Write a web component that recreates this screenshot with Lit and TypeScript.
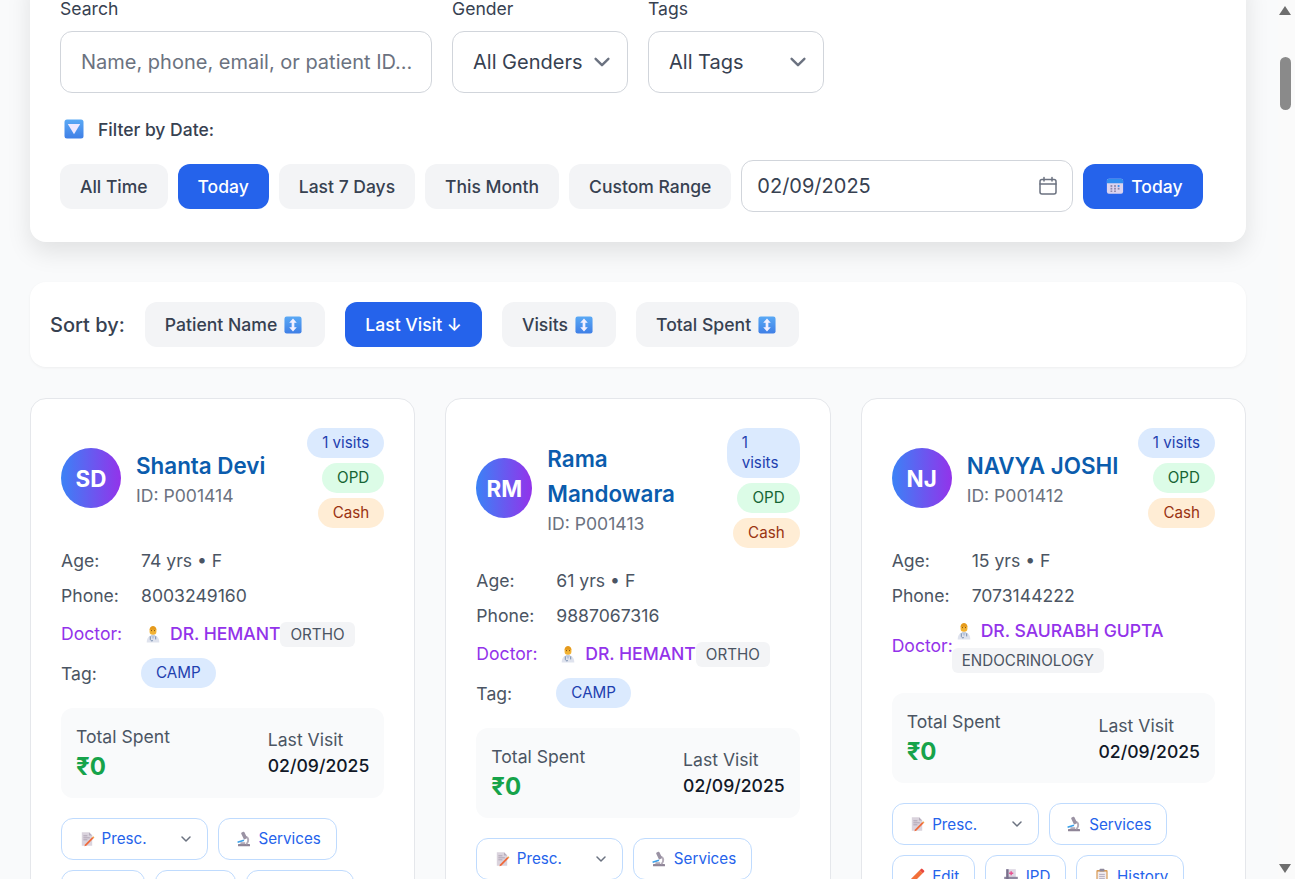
import { LitElement, html, css, svg } from "lit";
import { customElement } from "lit/decorators.js";

const chevron = html`<svg class="chev" viewBox="0 0 20 20" fill="none" stroke="currentColor" stroke-width="1.5" stroke-linecap="round" stroke-linejoin="round"><path d="M6 8l4 4 4-4"/></svg>`;

const ico = (content: unknown, cls = "") => html`<svg class="ico ${cls}" viewBox="0 0 20 20">${content}</svg>`;

const defsGrad = svg`<linearGradient id="blueSq" x1="0" y1="0" x2="0" y2="1"><stop offset="0" stop-color="#5aa9f5"/><stop offset="1" stop-color="#3f7fe6"/></linearGradient>`;
const downBox = ico(svg`${defsGrad}<rect x="0.5" y="0.5" width="19" height="19" rx="2.5" fill="url(#blueSq)"/><path d="M3.8 5h12.4L10 15.2z" fill="#efe8ff"/>`);
const updown = ico(svg`${defsGrad}<rect x="0.5" y="0.5" width="19" height="19" rx="2.5" fill="url(#blueSq)"/><path d="M10 2.8L14.2 7.6H11.5v4.8h2.7L10 17.2 5.8 12.4h2.7V7.6H5.8z" fill="#f3efff"/>`);
const calendar = ico(svg`<rect x="1" y="2" width="18" height="16.5" rx="2.2" fill="#dcd3ee"/><path d="M1 7V4.2C1 3 2 2 3.2 2h13.6C18 2 19 3 19 4.2V7z" fill="#2f8df0"/><g fill="#8d86a8"><rect x="5" y="9" width="2" height="2"/><rect x="9" y="9" width="2" height="2"/><rect x="5" y="12" width="2" height="2"/><rect x="9" y="12" width="2" height="2"/><rect x="13" y="12" width="2" height="2"/><rect x="5" y="15" width="2" height="1.6"/><rect x="9" y="15" width="2" height="1.6"/></g><rect x="13" y="9" width="2" height="2" fill="#2f8df0"/>`, "cal");
const doctor = ico(svg`<path d="M3 19.5c0-5 2.5-8 7-8s7 3 7 8z" fill="#dfe3ee"/><path d="M7.5 11.5L10 16l2.5-4.5z" fill="#b9c6dc"/><path d="M7 12.5v3.5M13 12.5v3.5M7 16c1 2 2 2 3 1" stroke="#5f7ba0" stroke-width="0.9" fill="none"/><rect x="6.2" y="2.2" width="7.6" height="8.6" rx="3.4" fill="#f2b233"/><path d="M6.2 5.2C6.4 2.5 8 1 10 1s3.6 1.5 3.8 4.2z" fill="#e59a1c"/><rect x="7.8" y="5.6" width="1" height="1.2" fill="#7a4a12"/><rect x="11.2" y="5.6" width="1" height="1.2" fill="#7a4a12"/>`);
const memo = ico(svg`<path d="M3.5 1.5h9l4 4v13h-13z" fill="#dad3dd"/><path d="M12.5 1.5l4 4h-4z" fill="#b6aebc"/><path d="M5.5 6h5M5.5 8.5h8M5.5 11h5" stroke="#a49bab" stroke-width="1"/><path d="M7.5 16.8l-.8 2.4 2.4-.8 9.2-9.2-1.6-1.6z" fill="#f0693a"/><path d="M16.7 7.6l1.6 1.6 1-1-1.6-1.6z" fill="#e9a03c"/>`);
const microscope = ico(svg`<rect x="2.5" y="16.3" width="15" height="2.8" rx="0.7" fill="#8f8597"/><path d="M11.5 6.8c3 .9 4.2 3.6 3.5 6.2-.3 1.3-1.1 2.5-2.2 3.3" stroke="#b3abb8" stroke-width="2.4" fill="none"/><rect x="8" y="1" width="4.4" height="9.4" rx="1.2" transform="rotate(-25 10 6)" fill="#9a92a3"/><path d="M2 14.2l8-2.6" stroke="#3aa0ea" stroke-width="2"/><rect x="5.5" y="14" width="6" height="2.4" fill="#b3abb8"/>`);
const pencil = ico(svg`<path d="M1.5 18.5l1.2-5 10.6-10.6 3.8 3.8L6.5 17.3z" fill="#f2703a"/><path d="M13.3 2.9l1.7-1.7a1.3 1.3 0 0 1 1.8 0l2 2a1.3 1.3 0 0 1 0 1.8l-1.7 1.7z" fill="#e8453c"/><path d="M2.7 13.5l3.8 3.8-5 1.2z" fill="#f6cfa3"/>`);
const hospital = ico(svg`<rect x="4" y="1.5" width="12" height="11" fill="#ddd6e3"/><rect x="1.5" y="11" width="17" height="8" fill="#8f88a0"/><rect x="4" y="1.5" width="3" height="17" fill="#786f8c"/><path d="M9.3 4h1.8v1.7h1.7v1.8h-1.7v1.7H9.3V7.5H7.6V5.7h1.7z" fill="#e8528f"/>`);
const clipboard = ico(svg`<rect x="3" y="2.5" width="14" height="17" rx="1.3" fill="#d99a52"/><rect x="4.5" y="4.5" width="11" height="13.5" fill="#f1ecf0"/><rect x="7" y="1" width="6" height="3.5" rx="0.8" fill="#8f8a9c"/><path d="M6.5 8h7M6.5 10.5h7M6.5 13h7M6.5 15.5h4" stroke="#a39bb0" stroke-width="1"/>`);

interface Patient {
  initials: string; name: string; id: string; age: string; phone: string;
  doctor: string; spec: string; tag?: string;
}
const patients: Patient[] = [
  { initials: "SD", name: "Shanta Devi", id: "P001414", age: "74 yrs • F", phone: "8003249160", doctor: "DR. HEMANT", spec: "ORTHO", tag: "CAMP" },
  { initials: "RM", name: "Rama Mandowara", id: "P001413", age: "61 yrs • F", phone: "9887067316", doctor: "DR. HEMANT", spec: "ORTHO", tag: "CAMP" },
  { initials: "NJ", name: "NAVYA JOSHI", id: "P001412", age: "15 yrs • F", phone: "7073144222", doctor: "DR. SAURABH GUPTA", spec: "ENDOCRINOLOGY" },
];

@customElement("app-root")
export class AppRoot extends LitElement {
  static styles = css`
    :host { display: flex; height: 879px; overflow: hidden; background: #fafafa; font-family: Inter, "Noto Sans", sans-serif; color: #374151; }
    * { box-sizing: border-box; }
    .page { width: 1278px; flex: none; background: #f9fafb; padding: 0 32px 0 30px; overflow: hidden; }
    .scrollbar { width: 17px; flex: none; background: #fafafa; position: relative; }
    .thumb { position: absolute; left: 2px; top: 57px; width: 11px; height: 53px; border-radius: 6px; background: #8a8a8a; }
    .arrow { position: absolute; left: 1px; width: 0; height: 0; border-left: 6.5px solid transparent; border-right: 6.5px solid transparent; }
    .arrow.up { top: 6px; border-bottom: 9px solid #6e6e6e; }
    .arrow.down { bottom: 6px; border-top: 9px solid #6e6e6e; }

    .ico { width: 18px; height: 18px; flex: none; display: block; }

    .filters { margin-top: -30px; background: #fff; border-radius: 16px; padding: 26px 30px 33px; box-shadow: 0 10px 25px rgba(0,0,0,.1); height: 272px; }
    .fields { display: flex; gap: 20px; }
    .field { display: flex; flex-direction: column; gap: 10px; }
    .field label { font-size: 17.6px; line-height: 25px; font-weight: 400; color: #374151; height: 25px; }
    .control { height: 62px; border: 1px solid #d1d5db; border-radius: 12px; background: #fff; font-size: 20px; display: flex; align-items: center; padding: 0 20px; color: #374151; white-space: nowrap; }
    .search { width: 372px; color: #6b7280; }
    .sel { width: 176px; justify-content: space-between; padding-right: 9px; }
    .chev { width: 20px; height: 20px; color: #6b7280; flex: none; }
    .sel .chev { width: 32px; height: 32px; }
    .date-label { display: flex; align-items: center; gap: 14px; margin: 24px 0 0 4px; height: 24px; font-size: 17.5px; font-weight: 500; }
    .date-label .ico { width: 20px; height: 20px; }
    .date-row { display: flex; align-items: center; gap: 10px; margin-top: 19px; }
    .btn { height: 45px; padding: 0 20px; border-radius: 12px; background: #f3f4f6; color: #374151; font-size: 17.5px; font-weight: 500; display: flex; align-items: center; gap: 6px; white-space: nowrap; }
    .btn.on { background: #2563eb; color: #fff; }
    .btn .ico { margin: 0 3px 0 1px; }
    .btn .ico.cal { margin: 0 1px 0 3px; }
    .date-input { width: 332px; height: 52px; padding: 0 14px 0 15px; border: 1px solid #d1d5db; border-radius: 12px; display: flex; align-items: center; justify-content: space-between; font-size: 20px; color: #374151; }
    .date-input svg { width: 20px; height: 20px; color: #6b7280; }

    .sort { margin-top: 40px; height: 85px; background: #fff; border-radius: 16px; box-shadow: 0 1px 3px rgba(0,0,0,.05); padding: 0 20px; display: flex; align-items: center; gap: 20px; }
    .sort-label { font-size: 20px; font-weight: 500; }
    .sort .btn { font-size: 17.6px; }

    .grid { display: grid; grid-template-columns: repeat(3, 1fr); gap: 30px; margin-top: 31px; }
    .card { height: 620px; background: #fff; border: 1px solid #e5e7eb; border-radius: 16px; padding: 29px 30px 30px; font-size: 17.6px; color: #4b5563; }
    .head { display: flex; align-items: center; justify-content: space-between; gap: 15px; margin-bottom: 15px; }
    .who { display: flex; align-items: center; gap: 15px; min-width: 0; }
    .avatar { width: 60px; height: 60px; flex: none; border-radius: 50%; background: linear-gradient(90deg, #3b82f6, #9333ea); color: #fff; display: flex; align-items: center; justify-content: center; font-size: 22.4px; font-weight: 700; }
    .avatar.squeezed { width: 56px; }
    .name { font-size: 22.4px; line-height: 35px; font-weight: 600; color: #0b5cad; }
    .pid { font-size: 17.6px; line-height: 25px; color: #6b7280; }
    .badges { display: flex; flex-direction: column; align-items: flex-end; gap: 5px; flex: none; }
    .badges.squeezed { width: 73px; }
    .badge { padding: 5px 15px; border-radius: 20px; font-size: 15.2px; line-height: 20px; font-weight: 400; }
    .b-visits { background: #dbeafe; color: #1e40af; }
    .b-opd { background: #dcfce7; color: #166534; }
    .b-cash { background: #ffedd5; color: #9a3412; }
    .row { display: flex; align-items: center; min-height: 35px; }
    .row .k { width: 80px; flex: none; }
    .row.tagrow { min-height: 38.5px; }
    .row.doc { color: #9333ea; min-height: 41px; }
    .row.doc.wrap { min-height: 65px; padding-bottom: 5px; }
    .row.doc.wrap .k { width: 60px; margin-top: 5px; }
    .doc-v { display: flex; align-items: center; flex-wrap: wrap; font-weight: 500; }
    .doc-name { display: flex; align-items: center; gap: 8px; padding-left: 3px; letter-spacing: -0.05px; }
    .wrap .doc-name { line-height: 34px; }
    .doc-name .ico { width: 18px; height: 18px; margin-left: 0; }
    .spec { background: #f3f4f6; color: #4b5563; border-radius: 6px; padding: 0 10px; font-size: 15.2px; line-height: 25px; font-weight: 400; margin-top: 2px; }
    .wrap .spec { margin-top: 0; }
    .tag { background: #dbeafe; color: #1e40af; border-radius: 20px; padding: 5px 15px; font-size: 15.2px; line-height: 20px; font-weight: 400; }
    .stats { margin-top: 15px; height: 90px; background: #f9fafb; border-radius: 12px; padding: 15px; display: flex; justify-content: space-between; align-items: center; }
    .stats .l { line-height: 27px; }
    .stats .r .l { line-height: 26px; }
    .amount { font-size: 24px; line-height: 33px; font-weight: 700; color: #16a34a; }
    .date { color: #111827; font-weight: 500; line-height: 25px; }
    .actions { margin-top: 20px; display: flex; flex-wrap: wrap; gap: 10px; }
    .act { height: 42px; padding: 0 15px 0 15.5px; border: 1px solid #bfdbfe; border-radius: 12px; background: #fff; color: #2563eb; font-size: 15.2px; font-weight: 400; display: flex; align-items: center; gap: 6px; white-space: nowrap; }
    .act .ico { width: 16px; height: 16px; margin: 0 1px; }
    .act.presc { width: 147px; justify-content: space-between; padding-right: 11px; }
    .act .lead { display: flex; align-items: center; gap: 6px; }
  `;

  private card(p: Patient) {
    const long = p.spec.length > 8;
    const squeezed = p.name === "Rama Mandowara";
    return html`<div class="card">
      <div class="head">
        <div class="who">
          <div class="avatar ${squeezed ? "squeezed" : ""}">${p.initials}</div>
          <div><div class="name">${p.name}</div><div class="pid">ID: ${p.id}</div></div>
        </div>
        <div class="badges ${squeezed ? "squeezed" : ""}">
          <span class="badge b-visits">1 visits</span>
          <span class="badge b-opd">OPD</span>
          <span class="badge b-cash">Cash</span>
        </div>
      </div>
      <div class="row"><span class="k">Age:</span><span>${p.age}</span></div>
      <div class="row"><span class="k">Phone:</span><span>${p.phone}</span></div>
      <div class="row doc ${long ? "wrap" : ""}"><span class="k">Doctor:</span>
        <div class="doc-v"><span class="doc-name">${doctor}${p.doctor}</span><span class="spec">${p.spec}</span></div>
      </div>
      ${p.tag ? html`<div class="row tagrow"><span class="k">Tag:</span><span class="tag">${p.tag}</span></div>` : ""}
      <div class="stats">
        <div><div class="l">Total Spent</div><div class="amount">₹0</div></div>
        <div class="r"><div class="l">Last Visit</div><div class="date">02/09/2025</div></div>
      </div>
      <div class="actions">
        <div class="act presc"><span class="lead">${memo}Presc.</span>${chevron}</div>
        <div class="act">${microscope}Services</div>
        <div class="act">${pencil}Edit</div>
        <div class="act">${hospital}IPD</div>
        <div class="act">${clipboard}History</div>
      </div>
    </div>`;
  }

  render() {
    return html`
      <div class="page">
        <section class="filters">
          <div class="fields">
            <div class="field"><label>Search</label><div class="control search">Name, phone, email, or patient ID...</div></div>
            <div class="field"><label>Gender</label><div class="control sel">All Genders ${chevron}</div></div>
            <div class="field"><label>Tags</label><div class="control sel">All Tags ${chevron}</div></div>
          </div>
          <div class="date-label">${downBox}Filter by Date:</div>
          <div class="date-row">
            <div class="btn">All Time</div>
            <div class="btn on">Today</div>
            <div class="btn">Last 7 Days</div>
            <div class="btn">This Month</div>
            <div class="btn">Custom Range</div>
            <div class="date-input">02/09/2025
              <svg viewBox="0 0 20 20" fill="none" stroke="currentColor" stroke-width="1.5" stroke-linecap="round"><rect x="2" y="3.5" width="16" height="14.5" rx="2"/><path d="M2 8h16M6 1.5v3.5M14 1.5v3.5"/></svg>
            </div>
            <div class="btn on">${calendar}Today</div>
          </div>
        </section>
        <section class="sort">
          <span class="sort-label">Sort by:</span>
          <div class="btn">Patient Name ${updown}</div>
          <div class="btn on">Last Visit ↓</div>
          <div class="btn">Visits ${updown}</div>
          <div class="btn">Total Spent ${updown}</div>
        </section>
        <section class="grid">${patients.map((p) => this.card(p))}</section>
      </div>
      <div class="scrollbar"><div class="arrow up"></div><div class="thumb"></div><div class="arrow down"></div></div>
    `;
  }
}
